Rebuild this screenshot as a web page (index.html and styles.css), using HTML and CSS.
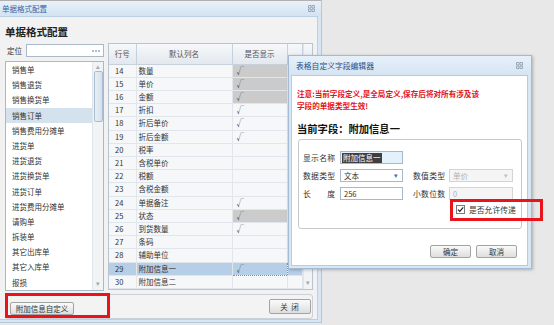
FILE: index.html
```html
<!DOCTYPE html>
<html>
<head>
<meta charset="utf-8">
<title>单据格式配置</title>
<link rel="stylesheet" href="styles.css">
</head>
<body>
<div class="main">
  <div class="win-title">
    <span>单据格式配置</span>
    <svg class="win-close" width="7" height="7" viewBox="0 0 7 7"><path d="M0.5 0.5h2.5v2.5h-2.5zM4 0.5h2.5v2.5h-2.5zM0.5 4h2.5v2.5h-2.5zM4 4h2.5v2.5h-2.5z" fill="none" stroke="#8a9aaa" stroke-width="0.8"/></svg>
  </div>
  <div class="main-body">
    <h1 class="page-head">单据格式配置</h1>
    <div class="columns">
      <div class="left">
        <div class="locate">
          <span class="locate-label">定位</span>
          <div class="locate-input">
            <svg class="dots" width="8" height="2" viewBox="0 0 8 2"><circle cx="1" cy="1" r="0.8" fill="#3b6fb0"/><circle cx="4" cy="1" r="0.8" fill="#3b6fb0"/><circle cx="7" cy="1" r="0.8" fill="#3b6fb0"/></svg>
          </div>
        </div>
        <div class="bill-list">
          <ul>
            <li>销售单</li>
            <li>销售退货</li>
            <li>销售换货单</li>
            <li class="active">销售订单</li>
            <li>销售费用分摊单</li>
            <li>进货单</li>
            <li>进货退货</li>
            <li>进货换货单</li>
            <li>进货订单</li>
            <li>进货费用分摊单</li>
            <li>请购单</li>
            <li>拆装单</li>
            <li>其它出库单</li>
            <li>其它入库单</li>
            <li>报损</li>
          </ul>
          <div class="vscroll">
            <span class="arrow">▴</span>
            <span class="thumb"></span>
            <span class="arrow bottom">▾</span>
          </div>
        </div>
      </div>
      <div class="grid">
        <table class="grid-table">
          <colgroup><col class="c-no"><col class="c-name"><col class="c-show"><col class="c-pad"></colgroup>
          <thead>
            <tr><th>行号</th><th>默认列名</th><th>是否显示</th><th></th></tr>
          </thead>
          <tbody>
            <tr><td class="no">14</td><td>数量</td><td class="chk grey">√</td><td></td></tr>
            <tr><td class="no">15</td><td>单价</td><td class="chk grey">√</td><td></td></tr>
            <tr><td class="no">16</td><td>金额</td><td class="chk grey">√</td><td></td></tr>
            <tr><td class="no">17</td><td>折扣</td><td class="chk">√</td><td></td></tr>
            <tr><td class="no">18</td><td>折后单价</td><td class="chk">√</td><td></td></tr>
            <tr><td class="no">19</td><td>折后金额</td><td class="chk">√</td><td></td></tr>
            <tr><td class="no">20</td><td>税率</td><td class="chk"></td><td></td></tr>
            <tr><td class="no">21</td><td>含税单价</td><td class="chk"></td><td></td></tr>
            <tr><td class="no">22</td><td>税额</td><td class="chk"></td><td></td></tr>
            <tr><td class="no">23</td><td>含税金额</td><td class="chk"></td><td></td></tr>
            <tr><td class="no">24</td><td>单据备注</td><td class="chk">√</td><td></td></tr>
            <tr><td class="no">25</td><td>状态</td><td class="chk grey">√</td><td></td></tr>
            <tr><td class="no">26</td><td>到货数量</td><td class="chk">√</td><td></td></tr>
            <tr><td class="no">27</td><td>条码</td><td class="chk"></td><td></td></tr>
            <tr><td class="no">28</td><td>辅助单位</td><td class="chk"></td><td></td></tr>
            <tr class="selected"><td class="no">29</td><td>附加信息一</td><td class="chk focus">√</td><td></td></tr>
            <tr><td class="no">30</td><td>附加信息二</td><td class="chk"></td><td></td></tr>
          </tbody>
        </table>
        <div class="vscroll grid-scroll">
          <span class="scroll-head"></span>
          <span class="arrow bottom">▾</span>
        </div>
      </div>
    </div>
    <div class="footer-bar">
      <button class="btn">附加信息自定义</button>
      <button class="btn btn-close">关&nbsp;闭</button>
    </div>
  </div>
</div>

<div class="dialog">
  <div class="win-title dialog-title">
    <span>表格自定义字段编辑器</span>
    <svg class="win-close" width="7" height="7" viewBox="0 0 7 7"><path d="M0.5 0.5h2.5v2.5h-2.5zM4 0.5h2.5v2.5h-2.5zM0.5 4h2.5v2.5h-2.5zM4 4h2.5v2.5h-2.5z" fill="none" stroke="#8a9aaa" stroke-width="0.8"/></svg>
  </div>
  <div class="dialog-body">
    <p class="note">注意:当前字段定义,是全局定义,保存后将对所有涉及该<br>字段的单据类型生效!</p>
    <h2 class="field-head">当前字段：附加信息一</h2>
    <div class="field-box">
      <div class="field-row">
        <span class="lbl">显示名称</span>
        <div class="inp inp-focus"><span class="sel-text">附加信息一</span></div>
      </div>
      <div class="field-row">
        <span class="lbl">数据类型</span>
        <div class="inp">文本<span class="drop">▾</span></div>
        <span class="lbl lbl2">数值类型</span>
        <div class="inp inp2 disabled">单价<span class="drop">▾</span></div>
      </div>
      <div class="field-row">
        <span class="lbl">长度</span>
        <div class="inp">256</div>
        <span class="lbl lbl2">小数位数</span>
        <div class="inp inp2 disabled">0</div>
      </div>
      <div class="check-row">
        <svg class="checkbox" width="9" height="9" viewBox="0 0 9 9"><rect x="0.5" y="0.5" width="8" height="8" fill="#fff" stroke="#7a7a7a"/><path d="M2 4.6l1.8 1.8 3.4-4" fill="none" stroke="#222" stroke-width="1.2"/></svg>
        <span>是否允许传递</span>
      </div>
    </div>
    <div class="dialog-buttons">
      <button class="btn">确定</button>
      <button class="btn">取消</button>
    </div>
  </div>
</div>

<div class="mark mark-btn"></div>
<div class="mark mark-check"></div>
</body>
</html>
```

FILE: styles.css
```css
* {
	box-sizing: border-box;
}
body {
	margin: 0;
	width: 554px;
	height: 325px;
	overflow: hidden;
	position: relative;
	background: #e8e8e8;
	font-family: "Noto Sans CJK SC", "Noto Sans", sans-serif;
	font-size: 8px;
	color: #333;
}
.main {
	width: 322px;
	height: 323px;
	display: flex;
	flex-direction: column;
	background: #d8e6f3;
	border-right: 1px solid #b3c7db;
	border-bottom: 1px solid #b3c7db;
}
.win-title {
	height: 16px;
	flex: none;
	display: flex;
	align-items: center;
	justify-content: space-between;
	padding: 0 6px 0 2px;
	background: linear-gradient(#e9f1f9, #d3e3f2);
	border-top: 1px solid #b0b0b0;
	color: #2f66a8;
	font-size: 7.5px;
}
.win-close {
	display: block;
}
.main-body {
	flex: 1;
	margin: 0 3px 2px 0;
	padding: 0 4px 0 4px;
	background: #f2f2f2;
	border: 1px solid #bcd0e3;
	border-left: none;
	display: flex;
	flex-direction: column;
}
.page-head {
	margin: 8px 0 4px 1px;
	font-size: 10.5px;
	line-height: 14px;
	font-weight: bold;
	color: #222;
}
.columns {
	display: flex;
	gap: 4px;
	padding-left: 1px;
}
.left {
	width: 99px;
	display: flex;
	flex-direction: column;
}
.locate {
	height: 13px;
	margin: 1px 0 4px;
	display: flex;
	align-items: center;
	gap: 4px;
	padding-left: 2px;
}
.locate-label {
	font-size: 7.5px;
}
.locate-input {
	flex: 1;
	height: 13px;
	background: #fff;
	border: 1px solid #a9b9c9;
	display: flex;
	justify-content: flex-end;
	align-items: center;
	padding-right: 3px;
}
.dots {
	display: block;
}
.bill-list {
	height: 230px;
	display: flex;
	background: #fff;
	border: 1px solid #a9b9c9;
}
.bill-list ul {
	flex: 1;
	margin: 0;
	padding: 0;
	list-style: none;
}
.bill-list li {
	height: 15.2px;
	line-height: 15.2px;
	padding-left: 6px;
	font-size: 7.5px;
	color: #333;
}
.bill-list li.active {
	background: #d3e2ed;
}
.vscroll {
	width: 11px;
	display: flex;
	flex-direction: column;
	align-items: center;
	background: #f1f3f5;
	border-left: 1px solid #e0e5ea;
	color: #a0a8b0;
}
.arrow {
	height: 9px;
	line-height: 9px;
	font-size: 7px;
}
.arrow.bottom {
	margin-top: auto;
	margin-bottom: 2px;
}
.thumb {
	width: 9px;
	height: 51px;
	background: linear-gradient(to right, #e9f0f6, #d4e0eb);
	border: 1px solid #a9bccf;
	border-radius: 2px;
}
.grid {
	width: 205px;
	height: 247px;
	display: flex;
	border: 1px solid #b8c5d1;
	background: #f5f7f9;
}
.grid-table {
	width: 193px;
	table-layout: fixed;
	border-collapse: collapse;
}
.c-no { width: 27px; }
.c-name { width: 96px; }
.c-show { width: 55px; }
.c-pad { width: 15px; }
.grid-table th {
	height: 20px;
	padding: 0;
	font-weight: normal;
	font-size: 7.5px;
	color: #555;
	background: linear-gradient(#f6f8fa, #e2e8ee);
	border-right: 1px solid #c6d1db;
	border-bottom: 1px solid #c6d1db;
}
.grid-table td {
	height: 13.2px;
	padding: 0 0 0 2px;
	font-size: 7.5px;
	line-height: 12px;
	border-right: 1px solid #e0e6ec;
	border-bottom: 1px solid #e0e6ec;
	white-space: nowrap;
	overflow: hidden;
}
.grid-table td.no {
	padding-left: 6px;
	font-size: 7.5px;
}
.grid-table td.chk {
	padding-left: 4px;
	color: #444;
}
.grid-table td.grey {
	background: #cbcbcb;
}
.grid-table tr.selected td {
	background: #b6cfe7;
}
.grid-table tr.selected td.focus {
	border: 1px dotted #6f98c2;
}
.grid-scroll {
	flex: 1;
	width: auto;
}
.scroll-head {
	width: 100%;
	height: 20px;
	background: linear-gradient(#f6f8fa, #e2e8ee);
	border-bottom: 1px solid #c6d1db;
}
.footer-bar {
	margin: 3px 0 0 1px;
	height: 25px;
	display: flex;
	align-items: center;
	justify-content: space-between;
	padding: 0 4px 0 4px;
	border: 1px solid #c9d0d7;
	border-radius: 3px;
	background: #f3f3f3;
}
.btn {
	height: 13px;
	padding: 0 4px;
	font-family: "Noto Sans CJK SC", "Noto Sans", sans-serif;
	font-size: 7.5px;
	line-height: 11px;
	color: #333;
	background: linear-gradient(#fafafa, #dedede);
	border: 1px solid #a3a3a3;
	border-radius: 2px;
}
.footer-bar .btn:first-child {
	margin-top: 3px;
	width: 64px;
}
.btn-close {
	width: 42px;
	height: 15px;
	margin-right: -3px;
	letter-spacing: 1px;
}
.dialog {
	position: absolute;
	left: 288px;
	top: 55px;
	width: 244px;
	height: 214px;
	display: flex;
	flex-direction: column;
	background: #d9e7f4;
	border: 1px solid #a3bbd2;
	box-shadow: 1px 1px 3px rgba(0, 0, 0, 0.25);
}
.dialog-title {
	height: 19px;
	border-top: none;
	background: linear-gradient(#e6f0f9, #d6e5f3);
	color: #1f4f8c;
	font-size: 7.8px;
	padding: 0 8px 0 7px;
}
.dialog-body {
	flex: 1;
	margin: 0 3px 2px 2px;
	background: #fff;
	border: 1px solid #b8cbdd;
	display: flex;
	flex-direction: column;
	padding: 12px 5px 0 5px;
}
.note {
	margin: 0;
	color: #e4141b;
	font-weight: bold;
	font-size: 7.6px;
	line-height: 12px;
}
.field-head {
	margin: 10px 0 3px;
	font-size: 10.3px;
	line-height: 14px;
	font-weight: bold;
	color: #111;
}
.field-box {
	margin-left: 1px;
	width: 224px;
	height: 90px;
	border: 1px solid #c8c8c8;
	border-radius: 3px;
	padding: 11px 0 0 4px;
	display: flex;
	flex-direction: column;
	gap: 5px;
}
.field-row {
	display: flex;
	align-items: center;
	height: 13px;
}
.lbl {
	width: 32px;
	margin-right: 5px;
	font-size: 7.8px;
	text-align: justify;
	text-align-last: justify;
}
.lbl2 {
	margin-left: 10px;
	margin-right: 4px;
}
.inp {
	width: 63px;
	height: 13px;
	border: 1px solid #a6b8c9;
	background: #fff;
	padding-left: 3px;
	display: flex;
	align-items: center;
	font-size: 7.5px;
	position: relative;
}
.inp2 {
	width: 64px;
}
.inp-focus {
	background: #e2f1fb;
	padding-left: 1px;
}
.sel-text {
	background: #3f3f3f;
	color: #fff;
	line-height: 10px;
	padding: 0 1px;
}
.drop {
	position: absolute;
	right: 4px;
	top: 0;
	line-height: 11px;
	font-size: 7px;
	color: #3b6fb0;
}
.disabled {
	background: #f5f5f5;
	border-color: #d4d4d4;
	color: #b0b0b0;
}
.disabled .drop {
	color: #c0c0c0;
}
.check-row {
	display: flex;
	align-items: center;
	gap: 4px;
	margin: -1px 0 0 153px;
	font-size: 7.8px;
}
.checkbox {
	display: block;
}
.dialog-buttons {
	margin-top: auto;
	margin-bottom: 7px;
	display: flex;
	justify-content: flex-end;
	gap: 5px;
	padding-right: 5px;
}
.dialog-buttons .btn {
	width: 41px;
}
.mark {
	position: absolute;
	border: 3px solid #e8131b;
}
.mark-btn {
	left: 5px;
	top: 293px;
	width: 105px;
	height: 25px;
}
.mark-check {
	left: 450px;
	top: 199px;
	width: 93px;
	height: 22px;
}
```
